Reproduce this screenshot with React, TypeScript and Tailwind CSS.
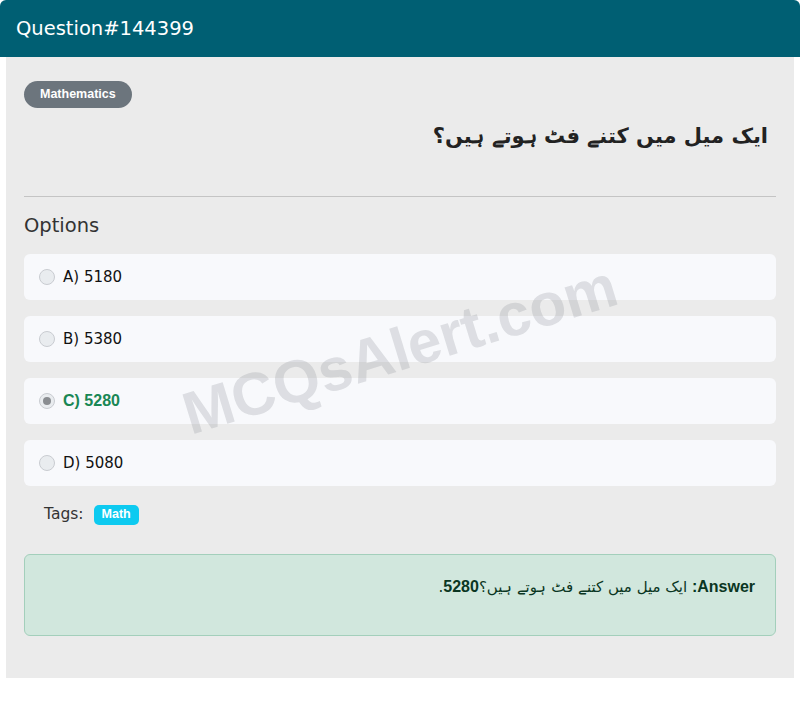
import React from 'react';

interface Option {
  label: string;
  value: string;
  correct?: boolean;
}

const options: Option[] = [
  { label: 'A)', value: '5180' },
  { label: 'B)', value: '5380' },
  { label: 'C)', value: '5280', correct: true },
  { label: 'D)', value: '5080' },
];

const question = 'ایک میل میں کتنے فٹ ہوتے ہیں؟';

const boldFont = { fontFamily: '"Liberation Sans", Arial, sans-serif' };

const Radio: React.FC<{ checked?: boolean }> = ({ checked }) => (
  <span className="w-4 h-4 rounded-full border border-[#c9ccd1] bg-[#e9ecef] flex items-center justify-center shrink-0">
    {checked && <span className="w-2 h-2 rounded-full bg-[#8a8d91]" />}
  </span>
);

export default function App() {
  return (
    <div className="w-[800px] h-[709px] bg-white" style={{ fontFamily: '"DejaVu Sans", sans-serif' }}>
      <div className="rounded-t-[6px] bg-[#005f73] h-[57px] flex items-center px-4">
        <h1 className="text-white text-[19.5px]">Question#144399</h1>
      </div>

      <div className="relative mx-[6px] bg-[#ebebeb] px-[18px] pt-6 pb-[42px] overflow-hidden">
        <span
          className="inline-flex items-center h-[27px] px-[16px] rounded-full bg-[#6c757d] text-white text-[12.5px] font-bold"
          style={boldFont}
        >
          Mathematics
        </span>

        <p dir="rtl" className="text-right text-[21px] font-bold text-[#222] pr-2 mt-[9px] leading-[38px]">
          {question}
        </p>

        <hr className="mt-[41px] border-t border-[#c4c4c4]" />

        <h2 className="text-[19.5px] text-[#333] mt-[15px] leading-[28px]">Options</h2>

        <div className="mt-[14px] flex flex-col gap-4">
          {options.map((o) => (
            <div key={o.label} className="h-[46px] rounded-[6px] bg-[#f8f9fc] flex items-center gap-2 px-[15px]">
              <Radio checked={o.correct} />
              {o.correct ? (
                <span className="text-[#198754] font-bold text-[16px]" style={boldFont}>
                  {o.label} {o.value}
                </span>
              ) : (
                <span className="text-[#111] text-[15px]">
                  {o.label} {o.value}
                </span>
              )}
            </div>
          ))}
        </div>

        <div className="mt-[17px] flex items-center gap-[10px] pl-5">
          <span className="text-[15.5px] text-[#333]">Tags:</span>
          <span
            className="inline-flex items-center h-5 px-[8px] rounded-[5px] bg-[#0dcaf0] text-white text-[12.5px] font-bold"
            style={boldFont}
          >
            Math
          </span>
        </div>

        <div
          dir="rtl"
          className="mt-7 h-[82px] rounded-[6px] border border-[#a3cfbb] bg-[#d1e7dd] px-5 pt-[20px] text-[15px] text-[#0a3622]"
        >
          <strong className="text-[16px]" style={boldFont}>Answer:</strong> {question}
          <strong className="text-[16px]" style={boldFont}>5280</strong>.
        </div>

        <div className="pointer-events-none absolute left-0 right-0 top-[253px] h-[80px] flex items-center justify-center">
          <span className="-rotate-[17deg] text-[60px] font-bold text-[#8c8f96]/25 whitespace-nowrap" style={boldFont}>
            MCQsAlert.com
          </span>
        </div>
      </div>
    </div>
  );
}
